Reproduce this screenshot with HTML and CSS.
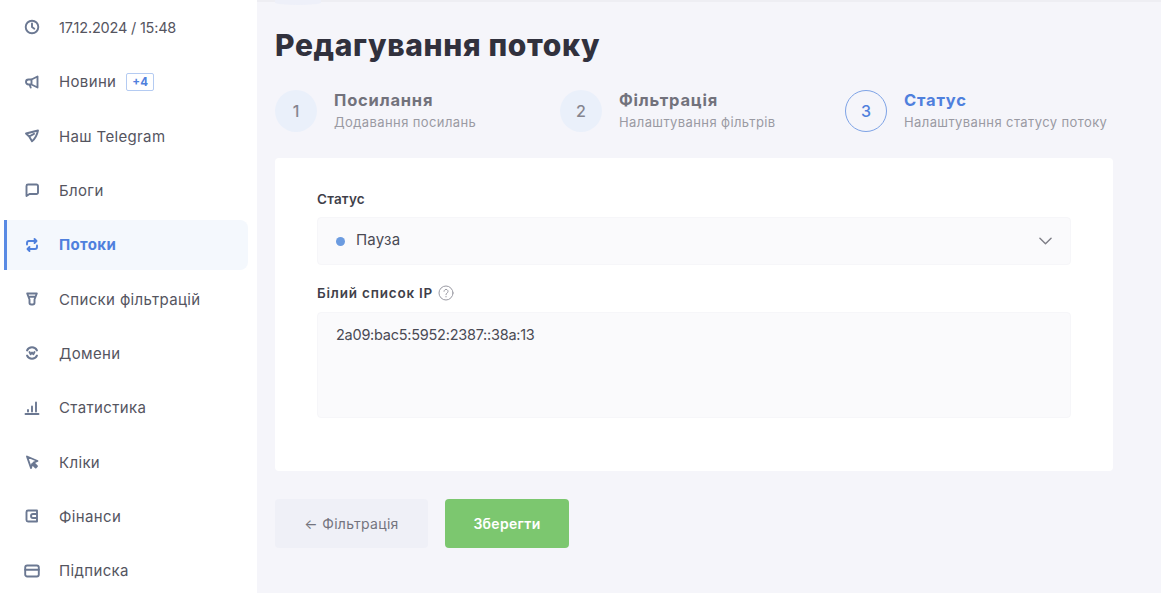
FILE: index.html
```html
<!DOCTYPE html>
<html lang="uk">
<head>
<meta charset="utf-8">
<title>Редагування потоку</title>
<link rel="stylesheet" href="styles.css">
</head>
<body>
<div class="app">
  <nav class="sidebar">
    <a class="item"><svg class="ico" viewBox="0 0 16 16"><circle cx="8" cy="8" r="6.300"/><path d="M8 4.400V8l2.300 1.700"/></svg><span class="date">17.12.2024 / 15:48</span></a>
    <a class="item"><svg class="ico" viewBox="0 0 16 16"><path d="M13.500 2.500v11L7.500 10.500H4.500a2.500 2.500 0 0 1 0-5h3zM7.500 5.500v5M5.500 10.500l1.200 3"/></svg><span>Новини</span><b class="badge">+4</b></a>
    <a class="item"><svg class="ico" viewBox="0 0 16 16"><path d="M14 2.500 2 5.500l3.200 3 2.800 4.800c3-2.500 5-6 6-10.800zM5.200 8.500 10 5.800"/></svg><span>Наш Telegram</span></a>
    <a class="item"><svg class="ico" viewBox="0 0 16 16"><path d="M4 2.500h8.500A1.500 1.500 0 0 1 14 4v6.500a1.500 1.500 0 0 1-1.500 1.500H5.500L2.500 14V4A1.500 1.500 0 0 1 4 2.500z"/></svg><span>Блоги</span></a>
    <a class="item active"><svg class="ico" viewBox="0 0 16 16"><path d="M3 7.500V6a2 2 0 0 1 2-2h7M10.500 2 12.500 4l-2 2M13 8.500V10a2 2 0 0 1-2 2H4M5.500 10l-2 2 2 2"/></svg><span>Потоки</span></a>
    <a class="item"><svg class="ico" viewBox="0 0 16 16"><path d="M3.200 2.500h9.600l-2.300 6v3.300a1.700 1.700 0 0 1-1.700 1.700H7.200a1.700 1.700 0 0 1-1.700-1.700V8.500zM4.500 5.800h7"/></svg><span>Списки фільтрацій</span></a>
    <a class="item"><svg class="ico" viewBox="0 0 16 16"><path d="M3 5.500a5.500 5.500 0 0 1 10 0M3 10.500a5.500 5.500 0 0 0 10 0M5.500 7l1.200 2.300L8 7.500l1.300 1.800L10.500 7"/></svg><span>Домени</span></a>
    <a class="item"><svg class="ico" viewBox="0 0 16 16"><path d="M1.500 14h13M4 11.500v-1.500M8 11.500V6.500M12 11.500V2.500"/></svg><span>Статистика</span></a>
    <a class="item"><svg class="ico" viewBox="0 0 16 16"><path d="M3 2.500 13.500 7l-4 1.700 3.500 3.500-1.300 1.300-3.500-3.500L7 14z"/></svg><span>Кліки</span></a>
    <a class="item"><svg class="ico" viewBox="0 0 16 16"><path d="M4 2.500h9v11H4a1.500 1.500 0 0 1-1.500-1.500V4A1.500 1.500 0 0 1 4 2.500zM13 6H9a2 2 0 0 0 0 4h4"/></svg><span>Фінанси</span></a>
    <a class="item"><svg class="ico" viewBox="0 0 16 16"><rect x="1.200" y="2.500" width="13.600" height="11" rx="2"/><path d="M1.200 6.800h13.600"/></svg><span>Підписка</span></a>
  </nav>
  <main class="main">
    <h1 class="title">Редагування потоку</h1>
    <div class="steps">
      <div class="step"><div class="num">1</div><div><div class="step-name">Посилання</div><div class="step-sub">Додавання посилань</div></div></div>
      <div class="step"><div class="num">2</div><div><div class="step-name">Фільтрація</div><div class="step-sub">Налаштування фільтрів</div></div></div>
      <div class="step current"><div class="num">3</div><div><div class="step-name">Статус</div><div class="step-sub">Налаштування статусу потоку</div></div></div>
    </div>
    <section class="card">
      <label class="label">Статус</label>
      <div class="select">
        <span class="dot"></span><span class="select-text">Пауза</span>
        <svg class="chev" viewBox="0 0 14 8"><path d="M1 1l6 6 6-6"/></svg>
      </div>
      <label class="label label-ip">Білий список IP
        <svg class="help" viewBox="0 0 16 16"><circle cx="8" cy="8" r="7"/><path d="M6 6.300a2 2 0 1 1 3 1.800c-.7.400-1 .8-1 1.500M8 11.300v.6"/></svg>
      </label>
      <div class="area">2a09:bac5:5952:2387::38a:13</div>
    </section>
    <div class="actions">
      <button class="btn back">← Фільтрація</button>
      <button class="btn save">Зберегти</button>
    </div>
  </main>
</div>
</body>
</html>
```
FILE: styles.css
```css
* { box-sizing: border-box; }
html, body { margin: 0; height: 100%; overflow: hidden; }
body { font-family: "Inter", "Noto Sans", sans-serif; background: #f5f5fa; color: #3f3f4a; }
.app { display: flex; height: 593px; overflow: hidden; }

.sidebar { width: 257px; flex: none; background: #fff; padding: 2.400px 9px 0 4px; display: flex; flex-direction: column; gap: 4.330px; }
.item { flex: none; height: 50px; display: flex; align-items: center; padding-left: 20px; border-radius: 0 8px 8px 0; font-size: 15px; letter-spacing: 0.350px; color: #55555f; }
.date { font-size: 14.500px; letter-spacing: -0.200px; }
.ico { width: 16px; height: 16px; margin-right: 19px; flex: none; fill: none; stroke: #6b7892; stroke-width: 1.900; stroke-linecap: round; stroke-linejoin: round; }
.badge { margin-left: 10px; padding: 0 5px; height: 18px; line-height: 16px; border: 1px solid #b4cbf2; border-radius: 2px; font-size: 11.500px; font-weight: 700; letter-spacing: 0; color: #4f80dd; }
.active { background: #f4f8fd; border-left: 3px solid #5a8be4; padding-left: 17px; color: #4f80dd; font-weight: 700; }
.active .ico { stroke: #4f80dd; }

.main { position: relative; flex: 1; min-width: 0; padding: 0 48px 0 18px; border-top: 2px solid #eeeef3; }
.main::before { content: ""; position: absolute; top: -2px; left: 18px; width: 46px; height: 5px; border-radius: 0 0 50% 50%; background: #eef0f9; }
.title { margin: 24px 0 0; height: 38px; line-height: 38px; font-size: 30px; font-weight: 800; letter-spacing: 0.650px; color: #31313d; }
.steps { display: flex; margin-top: 26px; }
.step { width: 285px; flex: none; display: flex; align-items: center; gap: 17px; height: 42px; }
.num { width: 42px; height: 42px; flex: none; border-radius: 50%; background: #eaf0fa; display: flex; align-items: center; justify-content: center; font-size: 16px; font-weight: 500; color: #85858f; }
.step-name { font-size: 16.500px; font-weight: 700; letter-spacing: 0.800px; line-height: 20px; color: #72727c; margin-top: -1px; }
.step-sub { font-size: 13px; letter-spacing: 0.400px; line-height: 18px; margin-top: 3px; color: #9a9aa3; }
.current .num { background: none; border: 1px solid #7ea3e6; color: #4f80dd; }
.current .step-name { color: #4f80dd; }

.card { margin-top: 26px; width: 838px; height: 313px; background: #fff; border-radius: 4px; padding: 32px 42px 0; }
.label { display: flex; align-items: center; gap: 5px; height: 18px; font-size: 13.500px; font-weight: 600; letter-spacing: 0.200px; color: #3f3f4a; }
.label-ip { margin-top: 19px; letter-spacing: 0.800px; }
.select { margin-top: 9px; height: 48px; background: #fafafc; border: 1px solid #f6f6f9; border-radius: 4px; display: flex; align-items: center; padding: 0 18px; font-size: 15px; letter-spacing: 0.200px; color: #4a4a54; }
.dot { width: 9px; height: 9px; border-radius: 50%; background: #6b9be0; margin-right: 11px; }
.select-text { flex: 1; padding-bottom: 3px; }
.chev { width: 13px; height: 8px; fill: none; stroke: #7d7d86; stroke-width: 1.500; stroke-linecap: round; stroke-linejoin: round; }
.help { width: 16px; height: 16px; fill: none; stroke: #9a9aa3; stroke-width: 1; stroke-linecap: round; }
.area { margin-top: 10px; height: 106px; background: #fafafc; border: 1px solid #f6f6f9; border-radius: 4px; padding: 13px 18px; font-size: 14.500px; letter-spacing: -0.250px; line-height: 18px; color: #4a4a54; }

.actions { display: flex; gap: 17px; margin-top: 28px; }
.btn { height: 49px; border: 0; border-radius: 4px; font-family: inherit; font-size: 14px; letter-spacing: 0.300px; }
.back { width: 153px; background: #eff0f7; color: #74747e; }
.save { width: 124px; background: #7cc76f; color: #fff; font-weight: 600; }
```
